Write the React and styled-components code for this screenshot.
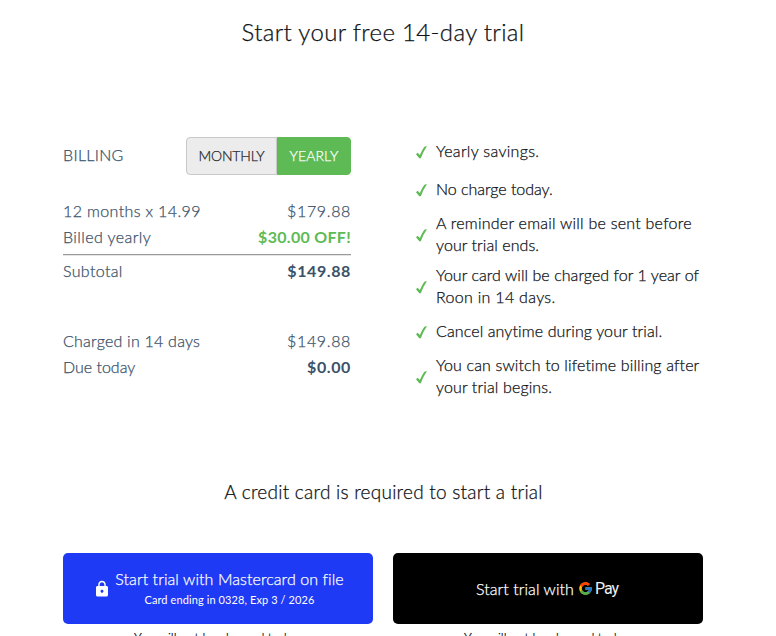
import React from "react"
import styled, { createGlobalStyle } from "styled-components"
import { MdLock } from "react-icons/md"
import { FcGoogle } from "react-icons/fc"

const Colors = {
  ink: "#0e1116",
  slate: "#3a5168",
  green: "#5dba54",
  blue: "#1f3af4",
}

const GlobalStyle = createGlobalStyle`
  * {
    box-sizing: border-box;
  }
  html, body {
    margin: 0;
    height: 100%;
    overflow: hidden;
    background: #fff;
  }
  body {
    font-family: Lato, "Open Sans", sans-serif;
    font-size: 16px;
    font-weight: 300;
    color: ${Colors.ink};
    -webkit-text-stroke: 0.25px;
  }
`

const Page = styled.main`
  width: 640px;
  margin-left: 63px;
  padding-top: 14px;
`

const Text = styled.span`
  display: block;
  white-space: nowrap;
  letter-spacing: ${p => p.$track || 0}px;
`

const Title = styled.h1`
  margin: 0;
  font-size: 24px;
  font-weight: 300;
  line-height: 36px;
  letter-spacing: 0.34px;
  text-align: center;
`

const Subtitle = styled.h2`
  margin: 74px 0 0;
  padding-left: 1px;
  font-size: 19px;
  font-weight: 300;
  line-height: 30px;
  letter-spacing: 0.24px;
  text-align: center;
`

const Columns = styled.section`
  display: flex;
  justify-content: space-between;
  margin-top: 83px;
`

const Billing = styled.div`
  width: 288px;
  padding-top: 4px;
  color: ${Colors.slate};
`

const BillingHeader = styled.div`
  display: flex;
  justify-content: space-between;
  align-items: center;
  margin-bottom: 23px;
`

const BillingLabel = styled(Text)`
  padding-bottom: 3px;
`

const Toggle = styled.div`
  display: flex;
  height: 38px;
`

const ToggleButton = styled.button`
  width: ${p => (p.$active ? 74 : 91)}px;
  padding: 0 0 1px;
  border: 1px solid ${p => (p.$active ? Colors.green : "#c8c8c8")};
  border-radius: ${p => (p.$active ? "0 4px 4px 0" : "4px 0 0 4px")};
  background: ${p => (p.$active ? Colors.green : "#ececec")};
  color: ${p => (p.$active ? "#fff" : "#26282b")};
  font: inherit;
  font-size: 14px;
  letter-spacing: ${p => (p.$active ? 0.1 : -0.15)}px;
`

const PriceRow = styled.div`
  display: flex;
  justify-content: space-between;
  line-height: 26px;
`

const Amount = styled(Text)`
  font-weight: ${p => (p.$bold ? 700 : 300)};
  color: ${p => (p.$sale ? Colors.green : "inherit")};
  -webkit-text-stroke: ${p => (p.$bold ? 0 : 0.25)}px;
`

const Divider = styled.hr`
  height: 2px;
  margin: 4px 0 2px;
  border: 0;
  border-top: 1px solid #999;
  border-bottom: 1px solid #e6e6e6;
`

const Spacer = styled.div`
  height: 44px;
`

const Benefits = styled.ul`
  width: 287px;
  margin: 0;
  padding: 0;
  list-style: none;
`

const Benefit = styled.li`
  display: flex;
  align-items: center;
  gap: 9px;
  min-height: 38px;
  padding: 4px 0;
  line-height: 22px;
`

const BenefitText = styled.div`
  margin: -1px 0 1px;
`

const CheckIcon = styled.svg`
  flex: none;
  width: 11px;
  height: 13px;
  fill: ${Colors.green};
`

const Buttons = styled.section`
  display: flex;
  gap: 20px;
  margin-top: 46px;
`

const ButtonColumn = styled.div`
  width: 310px;
`

const PayButton = styled.button`
  display: flex;
  align-items: center;
  justify-content: center;
  gap: 4px;
  width: 100%;
  height: 71px;
  padding: ${p => (p.$google ? "0 2px 0 0" : "0 0 0 1px")};
  border: 0;
  border-radius: 5px;
  background: ${p => (p.$google ? "#000" : Colors.blue)};
  color: #fff;
  font: inherit;
`

const CardLabel = styled.div`
  line-height: 22px;
`

const CardDetails = styled(Text)`
  font-size: 11px;
  font-weight: 400;
  line-height: 20px;
  -webkit-text-stroke: 0;
`

const GoogleLabel = styled(Text)`
  padding-bottom: 1px;
`

const GooglePay = styled.span`
  display: flex;
  align-items: center;
  gap: 2px;
  padding-bottom: 1px;
  color: #f1f1f1;
  font-family: Roboto, sans-serif;
  font-size: 16px;
  font-weight: 400;
  letter-spacing: -1px;
  -webkit-text-stroke: 0;
`

const Note = styled.p`
  margin: 4px 0 0;
  font-size: 13px;
  line-height: 20px;
  text-align: center;
  white-space: nowrap;
`

// each benefit is a list of [line, letter spacing]
const benefits = [
  [["Yearly savings.", 0.32]],
  [["No charge today.", -0.04]],
  [["A reminder email will be sent before", 0.24], ["your trial ends.", 0.07]],
  [["Your card will be charged for 1 year of", 0.05], ["Roon in 14 days.", 0.3]],
  [["Cancel anytime during your trial.", 0.11]],
  [["You can switch to lifetime billing after", 0.14], ["your trial begins.", 0.13]],
]

const Check = () => (
  <CheckIcon viewBox="0 0 11 13">
    <path d="M0 8.2 1.6 6.8 3.9 8.9C5.2 5.9 6.8 2.8 8.7.5L11 .3C8.6 3.6 6.4 7.8 4.9 12.3L3.3 12.3Z" />
  </CheckIcon>
)

const App = () => {
  return (
    <Page>
      <GlobalStyle />
      <Title>Start your free 14-day trial</Title>
      <Columns>
        <Billing>
          <BillingHeader>
            <BillingLabel $track={0.3}>BILLING</BillingLabel>
            <Toggle>
              <ToggleButton>MONTHLY</ToggleButton>
              <ToggleButton $active>YEARLY</ToggleButton>
            </Toggle>
          </BillingHeader>
          <PriceRow>
            <Text $track={0.37}>12 months x 14.99</Text>
            <Amount $track={0.65}>$179.88</Amount>
          </PriceRow>
          <PriceRow>
            <Text $track={0.42}>Billed yearly</Text>
            <Amount $track={0.3} $bold $sale>$30.00 OFF!</Amount>
          </PriceRow>
          <Divider />
          <PriceRow>
            <Text $track={0.35}>Subtotal</Text>
            <Amount $track={0.6} $bold>$149.88</Amount>
          </PriceRow>
          <Spacer />
          <PriceRow>
            <Text $track={0.23}>Charged in 14 days</Text>
            <Amount $track={0.65}>$149.88</Amount>
          </PriceRow>
          <PriceRow>
            <Text>Due today</Text>
            <Amount $track={0.6} $bold>$0.00</Amount>
          </PriceRow>
        </Billing>
        <Benefits>
          {benefits.map((lines, i) => (
            <Benefit key={i}>
              <Check />
              <BenefitText>
                {lines.map(([line, track]) => (
                  <Text key={line} $track={track}>{line}</Text>
                ))}
              </BenefitText>
            </Benefit>
          ))}
        </Benefits>
      </Columns>
      <Subtitle>A credit card is required to start a trial</Subtitle>
      <Buttons>
        <ButtonColumn>
          <PayButton>
            <MdLock size={18} />
            <CardLabel>
              <Text $track={0.08}>Start trial with Mastercard on file</Text>
              <CardDetails $track={0.1}>Card ending in 0328, Exp 3 / 2026</CardDetails>
            </CardLabel>
          </PayButton>
          <Note>You will not be charged today.</Note>
        </ButtonColumn>
        <ButtonColumn>
          <PayButton $google>
            <GoogleLabel $track={0.07}>Start trial with</GoogleLabel>
            <GooglePay>
              <FcGoogle size={15} />
              Pay
            </GooglePay>
          </PayButton>
          <Note>You will not be charged today.</Note>
        </ButtonColumn>
      </Buttons>
    </Page>
  )
}

export default App
